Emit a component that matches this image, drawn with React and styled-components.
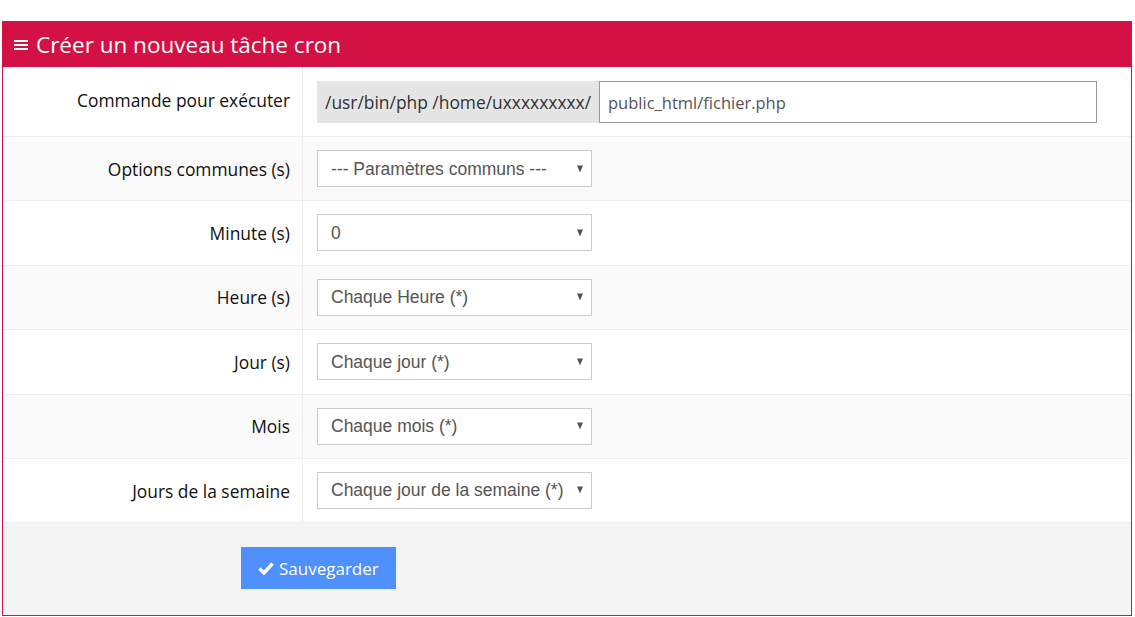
import React from 'react'
import styled, { createGlobalStyle } from 'styled-components'

const GlobalStyle = createGlobalStyle`
  body {
    margin: 0;
    background: #fff;
    font-family: "Open Sans", "Liberation Sans", sans-serif;
  }
`

const Panel = styled.div`
  margin: 21px 3px 2px 2px;
  border: 1px solid #c8174a;
  border-top: none;
`

const Header = styled.div`
  height: 46px;
  background: #d31145;
  color: #fff;
  display: flex;
  align-items: center;
  gap: 7px;
  padding: 0 12px;
  font-size: 22.5px;
  margin: 0 -1px;
`

const Row = styled.div`
  display: flex;
  background: ${p => (p.alt ? '#fafafa' : '#fff')};
  border-bottom: 1px solid #eee;
`

const Label = styled.div`
  width: 300px;
  box-sizing: border-box;
  border-right: 1px solid #eee;
  display: flex;
  align-items: center;
  justify-content: flex-end;
  padding-right: 12px;
  font-size: 17.4px;
  color: #111;
  padding-bottom: ${p => (p.tall ? '3px' : '0')};
`

const Field = styled.div`
  flex: 1;
  display: flex;
  padding: ${p => (p.tall ? '14px 34px 13px 14px' : '13px 14px 13.4px 14px')};
`

const Prefix = styled.span`
  width: 282px;
  height: 42px;
  box-sizing: border-box;
  background: #e5e5e5;
  color: #333;
  font-size: 17.4px;
  display: flex;
  align-items: center;
  padding-left: 8px;
  white-space: nowrap;
  overflow: hidden;
`

const TextInput = styled.input`
  flex: 1;
  height: 42px;
  box-sizing: border-box;
  border: 1px solid #999;
  padding: 0 8px;
  font-family: "Open Sans", sans-serif;
  font-size: 16.5px;
  color: #555;
  outline: none;
`

const SelectWrap = styled.div`
  position: relative;
  width: 275px;
  height: 37px;
`

const Select = styled.select`
  appearance: none;
  width: 100%;
  height: 100%;
  border: 1px solid #ccc;
  background: #fff;
  padding: 0 28px 0 13px;
  font-family: "Liberation Sans", Arial, sans-serif;
  font-size: 17.5px;
  color: #555;
  outline: none;
`

const Arrow = styled.span`
  position: absolute;
  right: 9px;
  top: 50%;
  transform: translateY(-50%);
  width: 0;
  height: 0;
  border-left: 3.5px solid transparent;
  border-right: 3.5px solid transparent;
  border-top: 7px solid #555;
  pointer-events: none;
`

const Footer = styled.div`
  background: #f4f4f4;
  padding: 24px 0 26px 238px;
`

const SaveButton = styled.button`
  display: inline-flex;
  align-items: center;
  gap: 5px;
  height: 42px;
  padding: 0 17px;
  background: #4d90fe;
  border: none;
  color: #fff;
  font-family: "Open Sans", sans-serif;
  font-size: 17px;
  cursor: pointer;
`

const rows = [
  { label: 'Options communes (s)', value: '--- Paramètres communs ---' },
  { label: 'Minute (s)', value: '0' },
  { label: 'Heure (s)', value: 'Chaque Heure (*)' },
  { label: 'Jour (s)', value: 'Chaque jour (*)' },
  { label: 'Mois', value: 'Chaque mois (*)' },
  { label: 'Jours de la semaine', value: 'Chaque jour de la semaine (*)' },
]

function Bars() {
  return (
    <svg width="15" height="13" viewBox="0 0 15 13">
      <rect x="0" y="2" width="14" height="2" fill="#fff" />
      <rect x="0" y="6" width="14" height="2" fill="#fff" />
      <rect x="0" y="10" width="14" height="2" fill="#fff" />
    </svg>
  )
}

function Check() {
  return (
    <svg width="16" height="14" viewBox="0 0 16 14">
      <path d="M1.5 7.5 L6 12 L14.5 2.5" stroke="#fff" strokeWidth="3.4" fill="none" strokeLinejoin="miter" />
    </svg>
  )
}

export default function App() {
  return (
    <>
      <GlobalStyle />
      <Panel>
        <Header>
          <Bars />
          Créer un nouveau tâche cron
        </Header>
        <Row>
          <Label tall>Commande pour exécuter</Label>
          <Field tall>
            <Prefix>/usr/bin/php /home/uxxxxxxxxx/</Prefix>
            <TextInput defaultValue="public_html/fichier.php" />
          </Field>
        </Row>
        {rows.map((r, i) => (
          <Row key={r.label} alt={i % 2 === 0}>
            <Label>{r.label}</Label>
            <Field>
              <SelectWrap>
                <Select defaultValue={r.value}>
                  <option>{r.value}</option>
                </Select>
                <Arrow />
              </SelectWrap>
            </Field>
          </Row>
        ))}
        <Footer>
          <SaveButton>
            <Check />
            Sauvegarder
          </SaveButton>
        </Footer>
      </Panel>
    </>
  )
}
